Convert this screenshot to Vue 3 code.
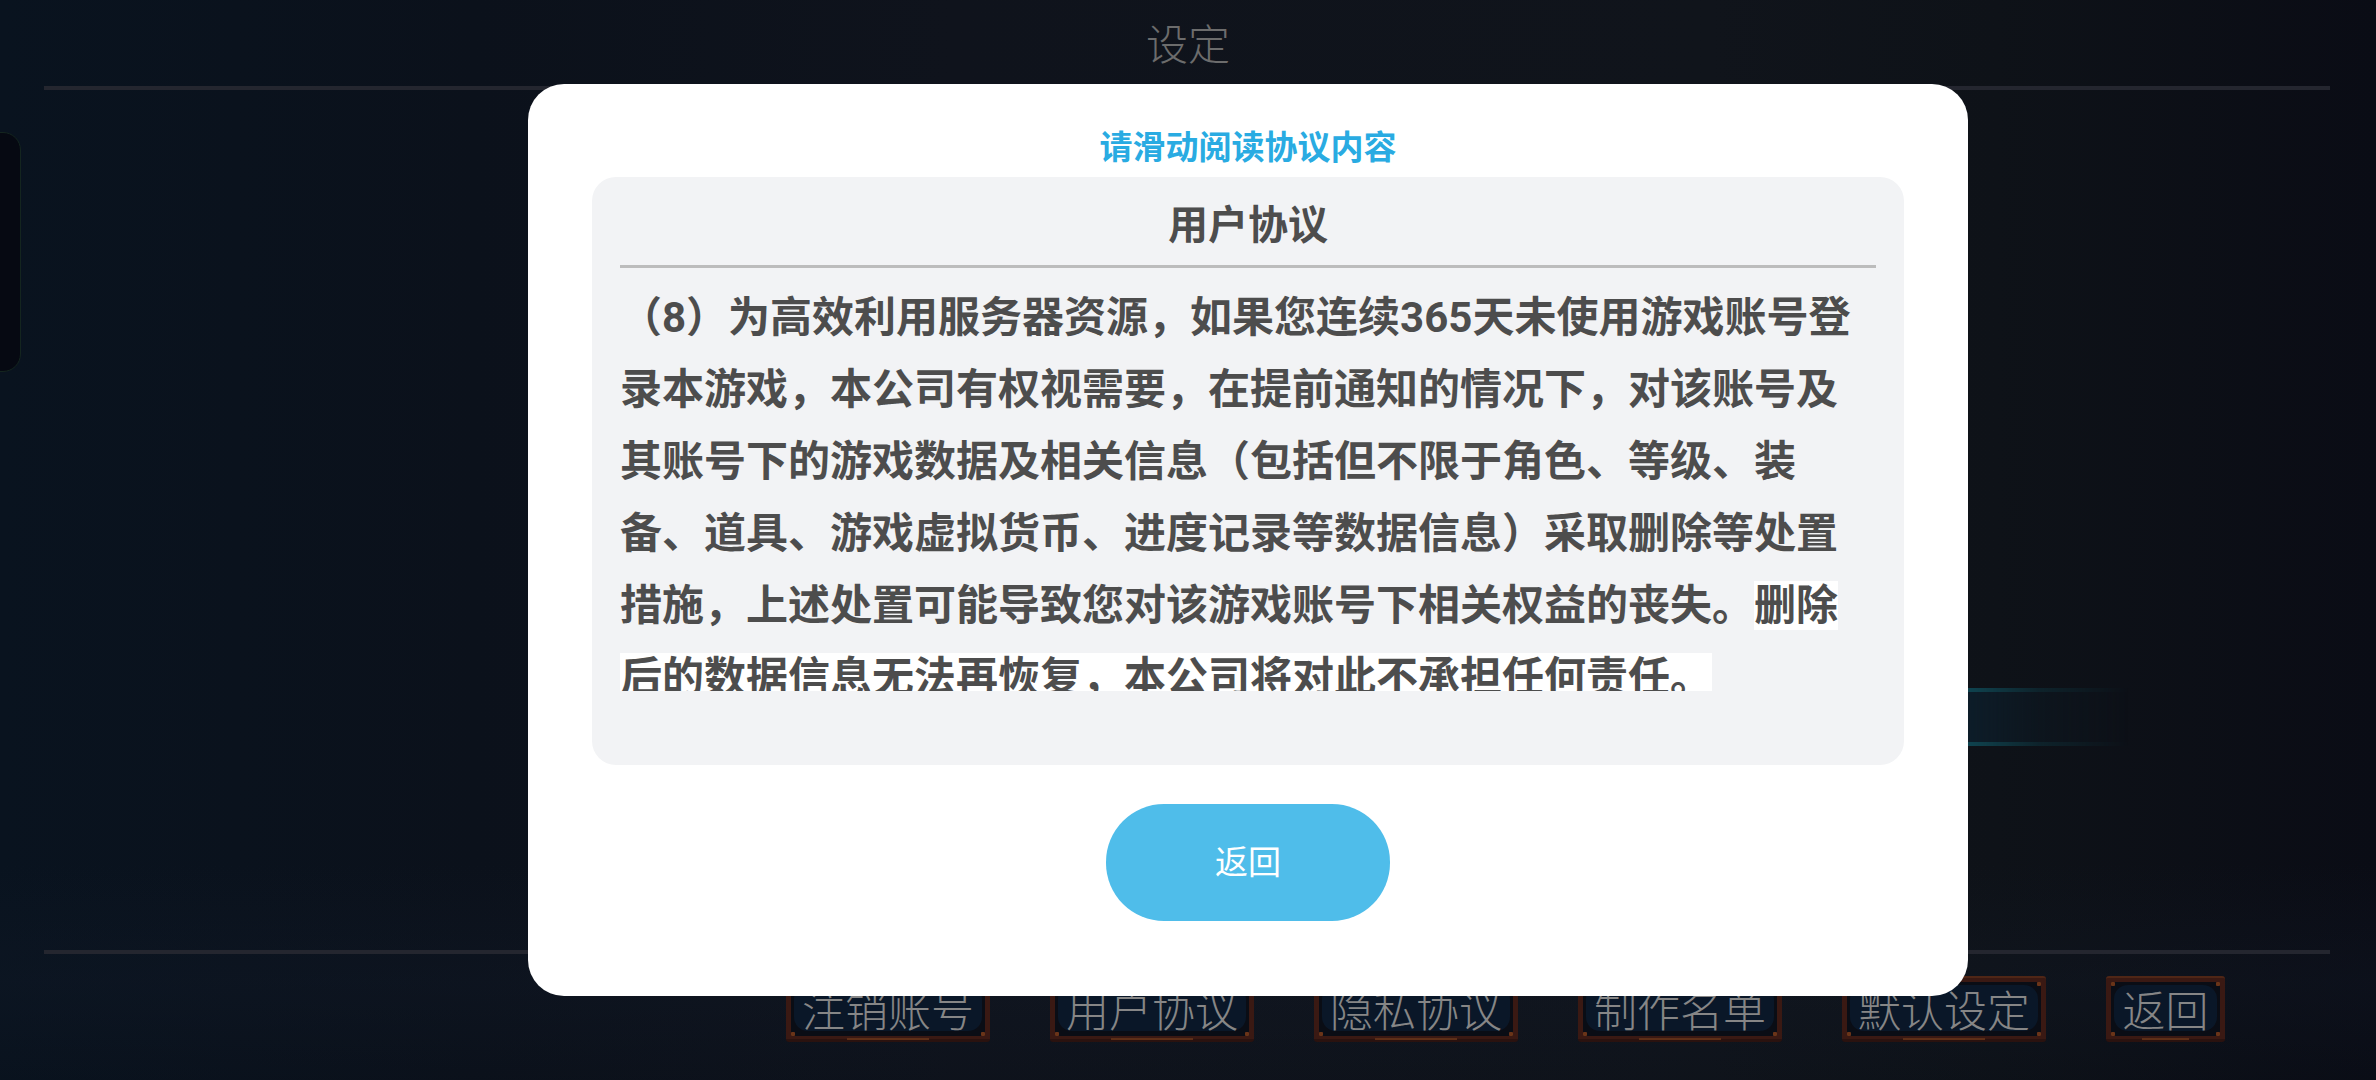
<script setup>
const tabs = ['注销账号', '用户协议', '隐私协议', '制作名单', '默认设定', '返回']
const bodyLead = '（8）为高效利用服务器资源，如果您连续365天未使用游戏账号登录本游戏，本公司有权视需要，在提前通知的情况下，对该账号及其账号下的游戏数据及相关信息（包括但不限于角色、等级、装备、道具、游戏虚拟货币、进度记录等数据信息）采取删除等处置措施，上述处置可能导致您对该游戏账号下相关权益的丧失。'
const bodyMark = '删除后的数据信息无法再恢复，本公司将对此不承担任何责任。'
</script>

<template>
  <div class="screen">
    <header class="top">设定</header>
    <div class="rule"></div>
    <main class="middle">
      <div class="side-panel"></div>
      <div class="glow"></div>
    </main>
    <div class="rule"></div>
    <nav class="tabs">
      <div v-for="t in tabs" :key="t" class="tab" :class="{ short: t.length === 2 }">
        <span class="tab-inner">{{ t }}</span>
      </div>
    </nav>

    <section class="dialog">
      <h2 class="notice">请滑动阅读协议内容</h2>
      <div class="panel">
        <h3 class="panel-title">用户协议</h3>
        <div class="scroll">
          <p class="body">{{ bodyLead }}<mark class="mark">{{ bodyMark }}</mark></p>
        </div>
      </div>
      <button class="back"><span class="back-label">返回</span></button>
    </section>
  </div>
</template>

<style>
html, body { margin: 0; background: #0a0e18; }
</style>

<style scoped>
.screen {
  position: relative;
  width: 2376px;
  height: 1080px;
  overflow: hidden;
  display: flex;
  flex-direction: column;
  font-family: Roboto, "Noto Sans CJK SC", sans-serif;
  background:
    linear-gradient(180deg, transparent 80%, rgba(18, 26, 40, 0.3) 91%, rgba(10, 16, 26, 0.2) 100%),
    linear-gradient(90deg, #09131f 0%, #0b111b 20%, #0f131c 40%, #10141b 72%, #0e1218 84%, #0a0c15 100%);
}
.top {
  height: 82px;
  padding-bottom: 4px;
  display: flex;
  align-items: center;
  justify-content: center;
  font-size: 42px;
  font-weight: 300;
  color: #6c6c6c;
}
.rule {
  height: 4px;
  margin: 0 46px 0 44px;
  background: #24262f;
  flex: none;
}
.middle {
  position: relative;
  flex: 1;
}
.side-panel {
  position: absolute;
  left: -20px;
  top: 42px;
  width: 39px;
  height: 238px;
  border: 1px solid #14251f;
  border-radius: 18px;
  background: #060912;
}
.glow {
  position: absolute;
  left: 1900px;
  top: 598px;
  width: 240px;
  height: 50px;
  border-top: 4px solid #0f4450;
  border-bottom: 4px solid #0f4450;
  background: #0d1d29;
  -webkit-mask-image: linear-gradient(90deg, #000 28%, rgba(0, 0, 0, 0.35) 58%, transparent 95%);
  mask-image: linear-gradient(90deg, #000 28%, rgba(0, 0, 0, 0.35) 58%, transparent 95%);
}
.tabs {
  height: 126px;
  flex: none;
  padding: 22px 151px 0 0;
  box-sizing: border-box;
  display: flex;
  justify-content: flex-end;
  align-items: flex-start;
  gap: 60px;
}
.tab {
  position: relative;
  width: 204px;
  height: 66px;
  box-sizing: border-box;
  padding: 4px 5px 3px;
  background: #3a1913;
  border-top: 2px solid #4f2616;
  border-bottom: 3px solid #2a120f;
  border-radius: 3px;
  display: flex;
}
.tab.short { width: 119px; }
.tab::after {
  content: "";
  position: absolute;
  left: 30%;
  right: 30%;
  bottom: -1px;
  height: 2px;
  background: #5e2f18;
}
.tab-inner {
  position: relative;
  z-index: 0;
  flex: 1;
  display: flex;
  align-items: center;
  justify-content: center;
  padding-bottom: 2px;
  white-space: nowrap;
  font-size: 43px;
  font-weight: 300;
  color: #868686;
  background:
    radial-gradient(circle at 2px 2px, #6a3418 2px, transparent 2.5px),
    radial-gradient(circle at calc(100% - 2px) 2px, #6a3418 2px, transparent 2.5px),
    radial-gradient(circle at 2px calc(100% - 2px), #6a3418 2px, transparent 2.5px),
    radial-gradient(circle at calc(100% - 2px) calc(100% - 2px), #6a3418 2px, transparent 2.5px),
    #0a0d15;
  overflow: hidden;
}
.tab-inner::before {
  content: "";
  position: absolute;
  inset: 3px 3px 5px;
  z-index: -1;
  border-radius: 14px;
  background: #0a1728;
}
.dialog {
  position: absolute;
  left: 528px;
  top: 84px;
  width: 1440px;
  height: 912px;
  box-sizing: border-box;
  padding: 42px 64px 0;
  background: #fff;
  border-radius: 36px;
  display: flex;
  flex-direction: column;
  align-items: center;
}
.notice {
  margin: 0;
  height: 51px;
  line-height: 44px;
  font-size: 33px;
  font-weight: 700;
  color: #29abe2;
}
.panel {
  width: 1312px;
  height: 588px;
  flex: none;
  box-sizing: border-box;
  padding: 0 28px;
  background: #f2f3f5;
  border-radius: 24px;
}
.panel-title {
  margin: 0;
  height: 91px;
  line-height: 97px;
  box-sizing: border-box;
  border-bottom: 3px solid #bcbcbc;
  text-align: center;
  font-size: 40px;
  font-weight: 700;
  color: #4d4d4d;
}
.scroll {
  margin-top: 14px;
  height: 409px;
  overflow: hidden;
}
.body {
  margin: 0;
  font-size: 42px;
  line-height: 72px;
  font-weight: 700;
  color: #4d4d4d;
}
.mark {
  background: #fff;
  color: inherit;
}
.back {
  margin-top: 39px;
  width: 284px;
  height: 117px;
  padding: 0 0 5px;
  border: none;
  border-radius: 58px;
  background: #4fbdea;
  color: #fff;
  font-family: inherit;
  font-size: 33px;
}
</style>
